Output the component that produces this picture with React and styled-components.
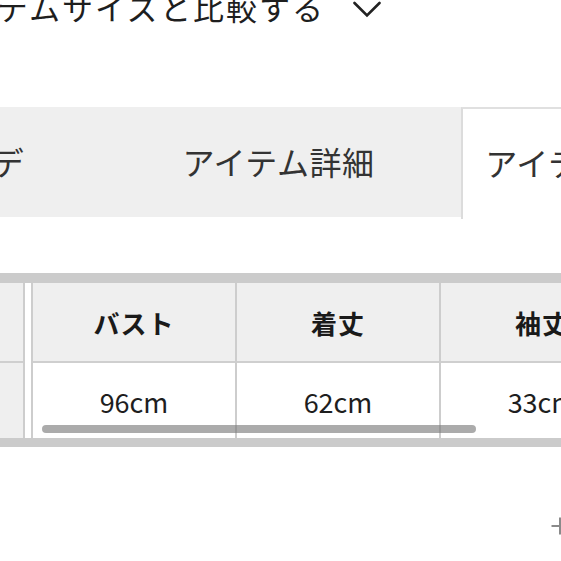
import React from "react";
import styled, { createGlobalStyle } from "styled-components";

const GlobalStyle = createGlobalStyle`
  html, body { margin: 0; padding: 0; background: #fff; }
  body { overflow: hidden; font-family: "Noto Sans CJK JP", "Noto Sans", sans-serif; color: #222; }
  * { box-sizing: border-box; }
`;

const Page = styled.div`
  width: 561px;
  height: 561px;
  overflow: hidden;
  display: flex;
  flex-direction: column;
  background: #fff;
`;

const HeadingRow = styled.div`
  display: flex;
  align-items: center;
  gap: 28px;
  margin-top: -13px;
  margin-left: -67px;
  height: 40px;
`;

const Heading = styled.h2`
  margin: 0;
  font-size: 31px;
  font-weight: 400;
  letter-spacing: 2px;
  line-height: 40px;
  white-space: nowrap;
  color: #1e1e1e;
`;

const ChevronBox = styled.span`
  display: flex;
  margin-top: 4px;
`;

const Tabs = styled.div`
  display: flex;
  margin-top: 80px;
  margin-left: -113px;
  height: 110px;
`;

const Tab = styled.div`
  flex: none;
  width: ${(p) => p.$width}px;
  display: flex;
  align-items: center;
  justify-content: center;
  font-size: 32px;
  letter-spacing: 0.5px;
  color: #333;
  white-space: nowrap;
  background: ${(p) => (p.$active ? "#fff" : "#efefef")};
  border-top: ${(p) => (p.$active ? "2px solid #e0e0e0" : "none")};
  border-left: ${(p) => (p.$active ? "2px solid #dcdcdc" : "none")};
  height: ${(p) => (p.$active ? "112px" : "110px")};
  padding-bottom: ${(p) => (p.$active ? "4px" : "2px")};
  padding-right: ${(p) => p.$shift || 0}px;
`;

const TableWrap = styled.div`
  position: relative;
  margin-top: 56px;
  border-top: 10px solid #cbcbcb;
  border-bottom: 9px solid #cbcbcb;
  display: flex;
  height: 174px;
`;

const Column = styled.div`
  flex: none;
  width: ${(p) => p.$width}px;
  display: flex;
  flex-direction: column;
  border-right: 2px solid #cdcdcd;
  margin-left: ${(p) => p.$offset || 0}px;
`;

const Gap = styled.div`
  flex: none;
  width: 8px;
  background: #fff;
  border-right: 2px solid #cdcdcd;
`;

const HeadCell = styled.div`
  height: 80px;
  background: #efefef;
  border-bottom: 2px solid #cfcfcf;
  display: flex;
  align-items: center;
  justify-content: center;
  font-size: 26px;
  font-weight: 700;
  letter-spacing: 1px;
  color: #1a1a1a;
  white-space: nowrap;
`;

const BodyCell = styled.div`
  flex: 1;
  background: ${(p) => (p.$muted ? "#efefef" : "#fff")};
  display: flex;
  align-items: center;
  justify-content: center;
  padding-top: 2px;
  font-size: 27px;
  color: #1e1e1e;
  white-space: nowrap;
`;

const ScrollThumb = styled.div`
  position: absolute;
  left: 42px;
  top: 142px;
  width: 434px;
  height: 8px;
  border-radius: 4px;
  background: rgba(120, 120, 120, 0.62);
`;

const Footer = styled.div`
  display: flex;
  justify-content: flex-end;
  margin-top: 70px;
  margin-right: -8px;
`;

const Chevron = () => (
  <svg width="28" height="17" viewBox="0 0 28 17" fill="none">
    <polyline points="1.5,2 14,14.5 26.5,2" stroke="#222" strokeWidth="2.6" strokeLinecap="round" />
  </svg>
);

const Plus = () => (
  <svg width="18" height="18" viewBox="0 0 18 18" fill="none">
    <path d="M9 0.5V17.5M0.5 9H17.5" stroke="#8a8a8a" strokeWidth="2" />
  </svg>
);

const columns = [
  { label: "バスト", value: "96cm" },
  { label: "着丈", value: "62cm" },
  { label: "袖丈", value: "33cm" },
];

export default function App() {
  return (
    <>
      <GlobalStyle />
      <Page>
        <HeadingRow>
          <Heading>アイテムサイズと比較する</Heading>
          <ChevronBox>
            <Chevron />
          </ChevronBox>
        </HeadingRow>
        <Tabs>
          <Tab $width={209} $shift={32}>コーデ</Tab>
          <Tab $width={365}>アイテム詳細</Tab>
          <Tab $width={270} $active>アイテムサイズ</Tab>
        </Tabs>
        <TableWrap>
          <Column $width={200} $offset={-175}>
            <HeadCell>サイズ</HeadCell>
            <BodyCell $muted>M</BodyCell>
          </Column>
          <Gap />
          {columns.map((c) => (
            <Column key={c.label} $width={204}>
              <HeadCell>{c.label}</HeadCell>
              <BodyCell>{c.value}</BodyCell>
            </Column>
          ))}
          <ScrollThumb />
        </TableWrap>
        <Footer>
          <Plus />
        </Footer>
      </Page>
    </>
  );
}
